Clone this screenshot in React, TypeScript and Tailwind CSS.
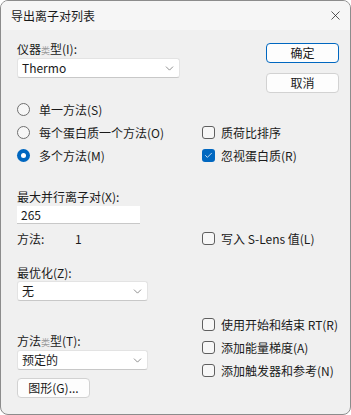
import { ChevronDown, X, Check } from "lucide-react"

const font = "font-['Noto_Sans_CJK_SC','Noto_Sans',sans-serif]"

function Radio({ label, checked }: { label: React.ReactNode; checked?: boolean }) {
  return (
    <div className="flex items-center h-[23px]">
      {checked ? (
        <span className="w-[13px] h-[13px] rounded-full bg-[#0067c0] flex items-center justify-center">
          <span className="w-[5px] h-[5px] rounded-full bg-white" />
        </span>
      ) : (
        <span className="w-[13px] h-[13px] rounded-full border border-[#6f6f6f] bg-[#f7f7f7]" />
      )}
      <span className="ml-[9px]">{label}</span>
    </div>
  )
}

function Checkbox({ label, checked }: { label: React.ReactNode; checked?: boolean }) {
  return (
    <div className="flex items-center h-[23px]">
      {checked ? (
        <span className="w-[13px] h-[13px] rounded-[3px] bg-[#0067c0] flex items-center justify-center">
          <Check className="w-[9px] h-[9px] text-white" strokeWidth={2} />
        </span>
      ) : (
        <span className="w-[13px] h-[13px] rounded-[3px] border border-[#5f5f5f] bg-[#f7f7f7]" />
      )}
      <span className="ml-[6px]">{label}</span>
    </div>
  )
}

function Select({ value, width }: { value: string; width: string }) {
  return (
    <div className={`${width} h-[20px] bg-white border border-[#e3e3e3] border-b-[#c8c8c8] rounded-[3px] flex items-center justify-between pl-[4px] pr-[3px]`}>
      <span>{value}</span>
      <ChevronDown className="w-[13px] h-[13px] text-[#555]" strokeWidth={1.2} />
    </div>
  )
}

export default function App() {
  return (
    <div className={`w-[351px] h-[415px] bg-white ${font} text-[12px] leading-[16px] text-[#1a1a1a]`}>
      <div className="w-full h-full rounded-[8px] border border-[#8c8c8c] bg-[#f0f0f0] overflow-hidden flex flex-col">
        <div className="h-[29px] bg-[#f6f6f6] flex items-center justify-between pl-[10px] pr-[7px] shrink-0">
          <span>导出离子对列表</span>
          <X className="w-[15px] h-[15px] text-[#222]" strokeWidth={1.2} />
        </div>

        <div className="flex-1 pl-[16px] pr-[11px] pt-[11px]">
          <div className="flex justify-between">
            <div>
              <div className="h-[16px]">
                仪器<span className="text-[9px] text-[#9a9a9a]">类</span>型(I):
              </div>
              <div className="mt-[1px]">
                <Select value="Thermo" width="w-[163px]" />
              </div>
            </div>
            <div className="flex flex-col gap-[10px] pt-[2px]">
              <div className="w-[73px] h-[20px] rounded-[4px] border border-[#0067c0] bg-[#fdfdfd] flex items-center justify-center">
                确定
              </div>
              <div className="w-[73px] h-[20px] rounded-[4px] border border-[#d2d2d2] bg-[#fdfdfd] flex items-center justify-center">
                取消
              </div>
            </div>
          </div>

          <div className="mt-[5px] grid grid-cols-[185px_1fr]">
            <Radio label="单一方法(S)" />
            <div />
            <Radio label="每个蛋白质一个方法(O)" />
            <Checkbox label="质荷比排序" />
            <Radio label="多个方法(M)" checked />
            <Checkbox label="忽视蛋白质(R)" checked />
          </div>

          <div className="mt-[22px] h-[16px]">最大并行离子对(X):</div>
          <div className="mt-[1px] w-[123px] h-[18px] bg-white border-b border-[#c8c8c8] flex items-center pl-[4px]">
            265
          </div>

          <div className="grid grid-cols-[185px_1fr] mt-[3px] items-center">
            <div className="flex h-[23px] items-center">
              <span className="w-[58px]">方法:</span>
              <span>1</span>
            </div>
            <Checkbox label="写入 S-Lens 值(L)" />
          </div>

          <div className="mt-[15px] h-[16px]">最优化(Z):</div>
          <Select value="无" width="w-[131px]" />

          <div className="grid grid-cols-[185px_1fr] mt-[12px]">
            <div className="pt-[20px]">
              <div className="h-[16px]">
                方法<span className="text-[9px] text-[#9a9a9a]">类</span>型(T):
              </div>
              <div className="mt-[1px]">
                <Select value="预定的" width="w-[131px]" />
              </div>
              <div className="mt-[8px] w-[73px] h-[20px] rounded-[4px] border border-[#d2d2d2] bg-[#fdfdfd] flex items-center justify-center">
                图形(G)...
              </div>
            </div>
            <div className="flex flex-col">
              <Checkbox label="使用开始和结束 RT(R)" />
              <Checkbox label="添加能量梯度(A)" />
              <Checkbox label="添加触发器和参考(N)" />
            </div>
          </div>
        </div>
      </div>
    </div>
  )
}
